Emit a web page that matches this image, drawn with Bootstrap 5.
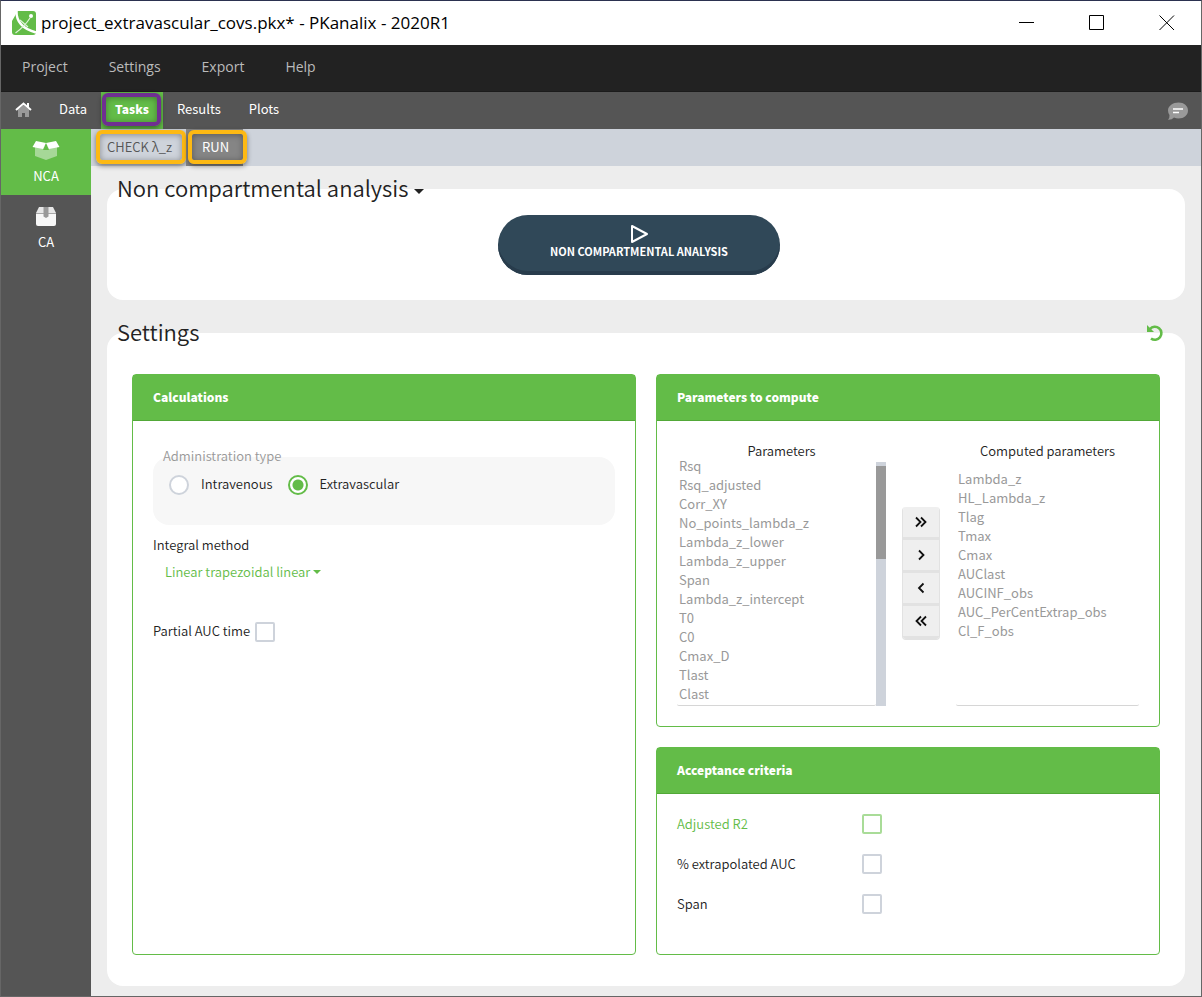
<!DOCTYPE html>
<html lang="en">
<head>
<meta charset="utf-8">
<meta name="viewport" content="width=device-width, initial-scale=1">
<title>project_extravascular_covs.pkx* - PKanalix - 2020R1</title>
<link href="https://cdn.jsdelivr.net/npm/bootstrap@5.3.0/dist/css/bootstrap.min.css" rel="stylesheet">
<style>
:root { --leaf: #63bc48; --slate: #555; --mist: #ced3db; --ash: #999; }
body { font-family: "Noto Sans CJK JP", "Source Sans Pro", sans-serif; font-size: 13px; font-weight: 350; line-height: 19px; color: #222; background: #ededed; }
button, input, select { font-family: inherit; font-weight: inherit; }
.app-window { border: 1px solid #666; border-top-color: #2b3150; }
.title-bar { height: 44px; font-family: "Open Sans", sans-serif; font-size: 17px; font-weight: 400; line-height: 24px; color: #000; padding-left: 10px; padding-right: 26px; }
.win-btn { width: 16px; height: 16px; }
.win-btns { gap: 54px; }
.menu-bar { height: 47px; background: #222; border-bottom: 1px solid #1b1b1b; font-family: "Open Sans", sans-serif; font-size: 14px; font-weight: 400; gap: 41px; padding: 0 21px 4px; }
.menu-bar a { color: #bbb; }
.tab-bar { height: 37px; background: var(--slate); font-weight: 400; }
.tab-bar .nav-link { color: #fff; padding: 7px 14px 11px; }
.tab-bar .nav-link.home { width: 44px; padding: 7px 0; text-align: center; }
.tab-bar .nav-link.active { background: var(--leaf); font-weight: 900; font-size: 12px; }
.comments { line-height: 0; margin-right: 13px; }
.ringed { position: relative; }
.ringed::after { content: ""; position: absolute; border: 4px solid #fdb913; border-radius: 6px; box-shadow: 0 2px 5px rgba(0,0,0,.45), inset 0 1px 6px rgba(0,0,0,.35); pointer-events: none; }
.ring-tasks::after { inset: 1px 2px 3px 1px; border-color: #6f2f91; }
.ring-check::after { inset: 1px 0 2px 5px; }
.ring-run::after { inset: 1px -4px 2px 2px; }
.side-bar { width: 90px; background: var(--slate); font-weight: 400; }
.side-bar .nav-link { height: 66px; color: #fff; border-radius: 0; padding: 10px 0 0; text-align: center; }
.side-bar .nav-link.active { background: var(--leaf); }
.side-bar svg { display: block; margin: 0 auto 5px; }
.work-area { min-width: 0; }
.tool-bar { height: 37px; background: var(--mist); }
.tool-bar button { border: 0; background: none; color: #555; padding: 0 14px 2px 16px; }
.tool-bar .run { background: #858585; color: #fff; font-weight: 400; }
.panel { display: flow-root; background: #fff; border-radius: 16px; margin: 23px 16px 0; }
.panel + .panel { margin-top: 33px; }
.panel-title { font-size: 22px; line-height: 28px; font-weight: 350; margin: 0; padding-left: 10px; }
.panel-head { margin-top: -16px; height: 32px; }
.panel-title button { border: 0; background: none; padding: 0; color: inherit; font-weight: inherit; }
.panel-title .dropdown-toggle::after { border-width: 5px 5px 0; vertical-align: 3px; margin-left: 6px; }
.launch-row { padding: 10px 14px 25px 0; }
.launch { min-width: 282px; height: 60px; border: 0; border-radius: 30px; background: #304858; box-shadow: inset 0 -4px 0 #283c4c; color: #fff; font-size: 11px; line-height: 14px; font-weight: 700; padding: 0 0 8px; }
.launch svg { display: block; margin: 0 auto; }
.reset { border: 0; background: none; padding: 0; margin-right: 21px; line-height: 0; }
.settings-grid { padding: 25px 25px 31px; display: grid; grid-template-columns: minmax(0,1fr) minmax(0,1fr); gap: 20px; }
.stack { gap: 20px; }
.box { border: 1px solid var(--leaf); border-radius: 4px; }
.box-head { background: var(--leaf); border-bottom: 1px solid #52a838; color: #fff; font-weight: 900; line-height: 19px; font-size: 12px; margin: 0; padding: 12px 20px 14px; }
.box-body { padding: 20px; }
.group { display: flow-root; background: #f7f7f7; border-radius: 16px; margin-top: 16px; padding: 0 10px 30px 16px; }
.group-title { color: var(--ash); margin: -11px 0 9px -6px; }
.choices { gap: 15px; }
.choice { gap: 12px; }
.choice label, .criteria label, .auc-row label { padding-bottom: 2px; }
.tick { margin: 0; width: 20px; height: 20px; border: 2px solid var(--mist); background-color: #fff; flex: none; }
.tick[type=checkbox] { border-radius: 2px; }
.tick[type=radio]:checked { border-color: var(--leaf); background-color: #fff; background-image: radial-gradient(circle, var(--leaf) 5px, transparent 6px); }
.tick.hot { border-color: #a9dc98; }
.hot-line { color: var(--leaf); }
.method-label { padding-top: 10px; }
.method { border: 0; background: none; color: var(--leaf); padding: 0; margin-left: 12px; }
.method::after { margin-left: 3px; vertical-align: 3px; border-width: 4px 4px 0; }
.auc-row { gap: 5px; }
.from-col { flex: 8 1 0; min-width: 0; }
.to-col { flex: 7 1 0; min-width: 0; }
.pick-list { display: block; flex: 1 1 0; min-width: 0; width: 100%; height: 246px; border: 0; border-bottom: 1px solid #d6d6d6; color: var(--ash); background: none; padding: 9px 0 12px; font-size: 13px; outline: 0; overflow-y: auto; scrollbar-width: none; }
.pick-list option { height: 19px; min-height: 19px; line-height: 19px; padding: 0 2px; }
.pick-list::-webkit-scrollbar { width: 0; }
.scroll-track { width: 10px; height: 244px; background: var(--mist); padding-top: 4px; }
.scroll-thumb { background: var(--ash); height: 93px; }
.movers { border: 1px solid #e2e2e2; border-top: 0; border-radius: 4px; overflow: hidden; width: 38px; }
.movers button { border: 0; border-bottom: 3px solid #e2e2e2; background: #efefef; height: 33px; padding: 0 0 1px; line-height: 0; }
.criteria { padding: 10px 20px 30px; }
.criteria .line { height: 40px; }
.criteria label { width: 40%; }
</style>
</head>
<body>
<div class="app-window min-vh-100 d-flex flex-column">
  <header>
    <div class="title-bar bg-white d-flex align-items-center">
      <svg width="26" height="26" viewBox="0 0 26 26" class="me-1"><path d="M4 1h18q3 0 3 3v18q0 3-3 3H4q-3 0-3-3V4q0-3 3-3z" fill="#63bc48"/><path d="M1 1h5.500Q4 6 1 11z" fill="#fff"/><path d="M5.500 1Q5 17 25 22.500" fill="none" stroke="#fff" stroke-width="2.400"/><path d="M4.500 23Q14 16 19 8M9 10l8 7" fill="none" stroke="#e0f2da" stroke-width="1.200"/><circle cx="20" cy="6" r="2" fill="#fff"/></svg>
      <span>project_extravascular_covs.pkx* - PKanalix - 2020R1</span>
      <div class="win-btns ms-auto d-flex">
        <button class="btn p-0 border-0 d-flex win-btn" aria-label="Minimize"><svg width="16" height="16"><path d="M0 7.500h15" stroke="#000"/></svg></button>
        <button class="btn p-0 border-0 d-flex win-btn" aria-label="Maximize"><svg width="16" height="16"><path d="M.5.5h14v14H.5z" fill="none" stroke="#000"/></svg></button>
        <button class="btn p-0 border-0 d-flex win-btn" aria-label="Close"><svg width="16" height="16"><path d="m.5.5 14.500 14.500m0-14.500-14.500 14.500" stroke="#000"/></svg></button>
      </div>
    </div>
    <nav class="menu-bar d-flex align-items-center">
      <a class="text-decoration-none" href="#">Project</a><a class="text-decoration-none" href="#">Settings</a><a class="text-decoration-none" href="#">Export</a><a class="text-decoration-none" href="#">Help</a>
    </nav>
    <nav class="tab-bar nav flex-nowrap">
      <a class="nav-link home" href="#" aria-label="Home"><svg width="17" height="17" viewBox="0 0 17 17"><path d="M3 7.500 8.500 3 14 7.500V15h-4v-4H7v4H3z" fill="#999"/><path d="M1 8 8.500 1.500 16 8M13 1v4" fill="none" stroke="#fff" stroke-width="2"/></svg></a>
      <a class="nav-link" href="#">Data</a>
      <a class="nav-link active ringed ring-tasks" href="#">Tasks</a>
      <a class="nav-link" href="#">Results</a>
      <a class="nav-link" href="#">Plots</a>
      <button class="comments btn p-0 border-0 ms-auto" aria-label="Comments"><svg width="20" height="18" viewBox="0 0 20 18"><path d="M10.500.5c5.500 0 9.500 3.500 9.500 8s-4 8-9.500 8q-2.500 0-4.500-1Q4 18 0 17.800 1.800 16 1.500 13 0 11 0 8.500C0 4 5 .5 10.500.5z" fill="#999"/><path d="M5 7h10M5 10.500h6" stroke="#fff" stroke-width="1.500"/></svg></button>
    </nav>
  </header>
  <div class="d-flex flex-grow-1">
    <nav class="side-bar nav flex-column flex-shrink-0">
      <a class="nav-link active" href="#"><svg width="28" height="22" viewBox="0 0 28 22"><path d="M3 7h22v10l-11 4-11-4z" fill="#a6d897"/><path d="M14 4v7l-3 0zM14 4v7l3 0z" fill="#63bc48"/><path d="m4 2 10 2-3 6L.5 8zM24 2 14 4l3 6 10.500-2z" fill="#fff"/></svg>NCA</a>
      <a class="nav-link" href="#"><svg width="22" height="22" viewBox="0 0 22 22"><path d="M4 2h14l3 6H1z" fill="#e6e6e6"/><path d="M1 8.500h20V19q0 2-2 2H3q-2 0-2-2z" fill="#f7f7f7"/><path d="M8.500 2h5v9.500L11 13l-2.500-1.500z" fill="#999"/></svg>CA</a>
    </nav>
    <main class="work-area flex-grow-1">
      <div class="tool-bar d-flex">
        <button class="ringed ring-check">CHECK λ_z</button>
        <button class="run ringed ring-run">RUN</button>
      </div>
      <section class="panel">
        <div class="panel-head"><h2 class="panel-title"><button class="dropdown-toggle">Non compartmental analysis</button></h2></div>
        <div class="launch-row d-flex justify-content-center">
          <button class="launch"><svg width="20" height="20" viewBox="0 0 20 20"><path d="M3 2v16l15-8z" fill="none" stroke="#fff" stroke-width="2" stroke-linejoin="round"/></svg>NON COMPARTMENTAL ANALYSIS</button>
        </div>
      </section>
      <section class="panel">
        <div class="panel-head d-flex align-items-start justify-content-between">
          <h2 class="panel-title">Settings</h2>
          <button class="reset align-self-center" aria-label="Reset settings"><svg width="18" height="18" viewBox="0 0 18 18"><path d="M4 5a6.500 6.500 0 1 1 1 9.500" fill="none" stroke="#63bc48" stroke-width="2.600"/><path d="M1 1v7h7z" fill="#63bc48"/></svg></button>
        </div>
        <div class="settings-grid">
          <section class="box">
            <h3 class="box-head">Calculations</h3>
            <div class="box-body">
              <div class="group" role="radiogroup" aria-labelledby="adm">
                <div class="group-title" id="adm">Administration type</div>
                <div class="choices d-flex">
                  <div class="d-flex align-items-center choice"><input class="form-check-input tick" type="radio" name="adm" id="iv"><label for="iv">Intravenous</label></div>
                  <div class="d-flex align-items-center choice"><input class="form-check-input tick" type="radio" name="adm" id="ev" checked><label for="ev">Extravascular</label></div>
                </div>
              </div>
              <div class="method-label">Integral method</div>
              <button class="method dropdown-toggle mt-2">Linear trapezoidal linear</button>
              <div class="auc-row d-flex align-items-center mt-4 pt-3"><label for="auc">Partial AUC time</label><input class="form-check-input tick" type="checkbox" id="auc"></div>
            </div>
          </section>
          <div class="stack d-flex flex-column">
            <section class="box">
              <h3 class="box-head">Parameters to compute</h3>
              <div class="box-body d-flex align-items-center gap-3">
                <div class="from-col">
                  <label class="d-block text-center" for="all">Parameters</label>
                  <div class="d-flex align-items-end">
                  <select class="pick-list" id="all" multiple size="12">
                    <option>Rsq</option><option>Rsq_adjusted</option><option>Corr_XY</option><option>No_points_lambda_z</option><option>Lambda_z_lower</option><option>Lambda_z_upper</option><option>Span</option><option>Lambda_z_intercept</option><option>T0</option><option>C0</option><option>Cmax_D</option><option>Tlast</option><option>Clast</option><option>AUClast_D</option><option>AUMClast</option><option>MRTlast</option><option>AUCall</option><option>AUCINF_D_obs</option><option>AUCINF_pred</option><option>AUCINF_D_pred</option><option>AUMCINF_obs</option><option>AUMCINF_pred</option><option>MRTINF_obs</option><option>MRTINF_pred</option><option>Vz_F_obs</option><option>Vz_F_pred</option><option>Cl_F_pred</option><option>Tau</option><option>Ctau</option><option>Ctrough</option><option>AUC_TAU</option><option>Cavg</option>
                  </select>
                  <div class="scroll-track"><div class="scroll-thumb"></div></div>
                  </div>
                </div>
                <div class="movers btn-group-vertical flex-shrink-0">
                  <button class="w-100" aria-label="Add all"><svg width="14" height="12" viewBox="0 0 14 12"><path d="m2 1.500 4.500 4.500L2 10.500M7 1.500 11.500 6 7 10.500" fill="none" stroke="#111" stroke-width="1.800"/></svg></button>
                  <button class="w-100" aria-label="Add"><svg width="14" height="12" viewBox="0 0 14 12"><path d="M5 1.500 9.500 6 5 10.500" fill="none" stroke="#111" stroke-width="1.800"/></svg></button>
                  <button class="w-100" aria-label="Remove"><svg width="14" height="12" viewBox="0 0 14 12"><path d="M9.500 1.500 5 6l4.500 4.500" fill="none" stroke="#111" stroke-width="1.800"/></svg></button>
                  <button class="w-100" aria-label="Remove all"><svg width="14" height="12" viewBox="0 0 14 12"><path d="M7 1.500 2.500 6 7 10.500M12 1.500 7.500 6l4.500 4.500" fill="none" stroke="#111" stroke-width="1.800"/></svg></button>
                </div>
                <div class="to-col">
                  <label class="d-block text-center" for="chosen">Computed parameters</label>
                  <select class="pick-list" id="chosen" multiple size="12">
                    <option>Lambda_z</option><option>HL_Lambda_z</option><option>Tlag</option><option>Tmax</option><option>Cmax</option><option>AUClast</option><option>AUCINF_obs</option><option>AUC_PerCentExtrap_obs</option><option>Cl_F_obs</option>
                  </select>
                </div>
              </div>
            </section>
            <section class="box flex-grow-1">
              <h3 class="box-head">Acceptance criteria</h3>
              <div class="criteria">
                <div class="line hot-line d-flex align-items-center"><label for="r2">Adjusted R2</label><input class="form-check-input tick hot" type="checkbox" id="r2"></div>
                <div class="line d-flex align-items-center"><label for="ex">% extrapolated AUC</label><input class="form-check-input tick" type="checkbox" id="ex"></div>
                <div class="line d-flex align-items-center"><label for="sp">Span</label><input class="form-check-input tick" type="checkbox" id="sp"></div>
              </div>
            </section>
          </div>
        </div>
      </section>
    </main>
  </div>
</div>
<script src="https://cdn.jsdelivr.net/npm/bootstrap@5.3.0/dist/js/bootstrap.bundle.min.js"></script>
<script>document.getElementById('all').scrollTop = 13;</script>
</body>
</html>
